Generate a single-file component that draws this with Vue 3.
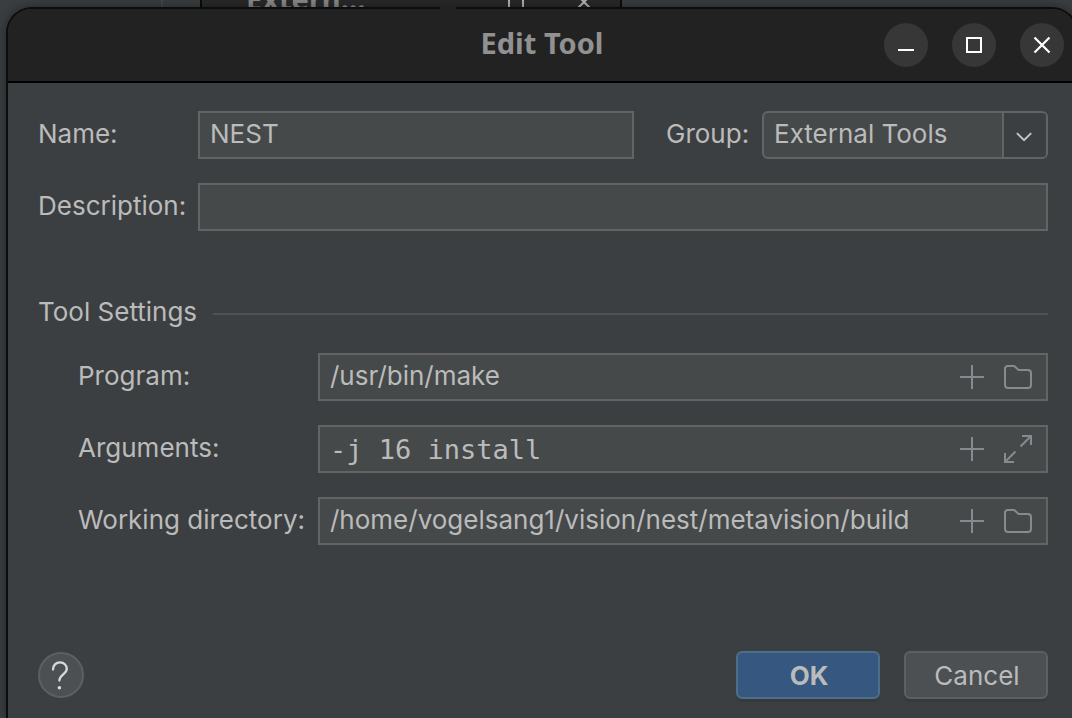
<script setup>
import { ref } from 'vue'

const name = ref('NEST')
const group = ref('External Tools')
const description = ref('')
const settings = ref([
  { id: 'program', label: 'Program:', value: '/usr/bin/make', action: 'browse', mono: false },
  { id: 'arguments', label: 'Arguments:', value: '-j 16 install', action: 'expand', mono: true },
  { id: 'directory', label: 'Working directory:', value: '/home/vogelsang1/vision/nest/metavision/build', action: 'browse', mono: false },
])
</script>

<template>
  <div class="desktop">
    <div class="pane-edge"></div>
    <div class="back-window">
      <span class="back-title">Extern…</span>
      <svg class="back-controls" width="84" height="12" viewBox="0 0 84 12" fill="none" stroke="#b4b4b4" stroke-width="2">
        <path d="M1 -6H15V8H1Z M70 -4L82 8M82 -4L70 8" />
      </svg>
    </div>

    <main class="dialog">
      <header class="titlebar">
        <h1>Edit Tool</h1>
        <div class="controls">
          <button type="button" aria-label="Minimize">
            <svg width="44" height="44" viewBox="0 0 44 44"><path d="M14 26H30V28H14Z" fill="#fff" /></svg>
          </button>
          <button type="button" aria-label="Maximize">
            <svg width="44" height="44" viewBox="0 0 44 44"><path d="M15 15H29V29H15Z" fill="none" stroke="#fff" stroke-width="2" /></svg>
          </button>
          <button type="button" aria-label="Close">
            <svg width="44" height="44" viewBox="0 0 44 44"><path d="M14.5 14.5L29.5 29.5M29.5 14.5L14.5 29.5" fill="none" stroke="#fff" stroke-width="2.2" /></svg>
          </button>
        </div>
      </header>

      <form class="content" @submit.prevent>
        <div class="row">
          <label class="main-label" for="name">Name:</label>
          <div class="field"><input id="name" v-model="name" type="text" /></div>
          <label class="group-label" for="group">Group:</label>
          <div class="combo">
            <select id="group" v-model="group">
              <option>External Tools</option>
            </select>
            <svg class="chevron" width="44" height="44" viewBox="0 0 44 44">
              <path d="M13.5 20L21 27.5L28.5 20" fill="none" stroke="#c3c5c7" stroke-width="2" />
            </svg>
          </div>
        </div>
        <div class="row">
          <label class="main-label" for="description">Description:</label>
          <div class="field"><input id="description" v-model="description" type="text" /></div>
        </div>

        <fieldset>
          <legend>Tool Settings</legend>
          <div v-for="item in settings" :key="item.id" class="row">
            <label class="setting-label" :for="item.id">{{ item.label }}</label>
            <div class="field">
              <input :id="item.id" v-model="item.value" :class="{ mono: item.mono }" type="text" />
              <button class="tool" type="button" aria-label="Insert macro">
                <svg width="32" height="32" viewBox="0 0 32 32"><path d="M16 4V28M4 16H28" /></svg>
              </button>
              <button class="tool" type="button" :aria-label="item.action === 'browse' ? 'Browse' : 'Expand'">
                <svg width="32" height="32" viewBox="0 0 32 32">
                  <path v-if="item.action === 'browse'" d="M6 5H12.2L16.6 9H26Q29 9 29 12V24Q29 27 26 27H6Q3 27 3 24V8Q3 5 6 5Z" />
                  <path v-else d="M20 3H29V12M29 3L18.5 13.5M3 20V29H12M3 29L13.5 18.5" />
                </svg>
              </button>
            </div>
          </div>
        </fieldset>

        <footer>
          <button class="help" type="button" aria-label="Help">
            <svg width="42" height="42" viewBox="0 0 42 42">
              <path d="M13 15.5C13 11.4 16 8.3 20 8.3C24 8.3 26.8 11.2 26.8 14.8C26.8 20.3 19.4 20.4 19.4 26.5" fill="none" stroke="#d7dadc" stroke-width="2.3" stroke-linecap="round" />
              <circle cx="19.4" cy="33.8" r="1.8" fill="#d7dadc" />
            </svg>
          </button>
          <button class="action primary" type="submit">OK</button>
          <button class="action" type="button">Cancel</button>
        </footer>
      </form>
    </main>
  </div>
</template>

<style>
body {
  margin: 0;
  background: #3c3f41;
}
</style>

<style scoped>
* {
  box-sizing: border-box;
}
.desktop {
  position: relative;
  display: flex;
  min-height: 100vh;
  padding: 7px 0 0 6px;
  overflow: hidden;
  background: #3a3e40;
  color: #bbbbbb;
  font: 26px/32px Inter, "Liberation Sans", sans-serif;
}
button, input, select {
  margin: 0;
  padding: 0;
  border: 0;
  color: inherit;
  font: inherit;
  outline: 0;
}
svg {
  display: block;
}
.pane-edge {
  position: absolute;
  top: 0;
  left: 161px;
  width: 2px;
  height: 10px;
  background: #46484a;
}
.back-window {
  position: absolute;
  top: 0;
  left: 200px;
  width: 422px;
  height: 24px;
  border: solid #0b0b0b;
  border-width: 0 2px;
  background: #292929;
}
.back-title {
  position: absolute;
  bottom: 7px;
  left: 44px;
  color: #8a8a8a;
  font: bold 29px/36px "Noto Sans", sans-serif;
}
.back-controls {
  position: absolute;
  top: 0;
  left: 306px;
}
.dialog {
  position: relative;
  display: flex;
  flex: 1;
  flex-direction: column;
  margin-right: -6px;
  border: 2px solid #0b0c0c;
  border-bottom: 0;
  border-radius: 26px 26px 0 0;
  background: #3c3f41;
  box-shadow: 0 0 12px #0006;
}
.dialog::before {
  position: absolute;
  top: -2px;
  left: 432px;
  width: 16px;
  height: 2px;
  background: #222222;
  content: "";
}
.titlebar {
  display: grid;
  grid-template-columns: 1fr auto 1fr;
  align-items: center;
  height: 74px;
  padding: 0 12px 0;
  border-bottom: 2px solid #000;
  border-radius: 24px 24px 0 0;
  background: #222222;
}
h1 {
  grid-column: 2;
  margin: 0;
  padding-bottom: 4px;
  color: #919191;
  font: bold 29px/36px "Noto Sans", sans-serif;
}
.controls {
  display: flex;
  justify-content: flex-end;
  gap: 24px;
}
.controls button {
  width: 44px;
  height: 44px;
  border-radius: 50%;
  background: #373737;
}
.content {
  display: flex;
  flex: 1;
  flex-direction: column;
  gap: 24px;
  padding: 28px 28px 19px 30px;
}
.row {
  display: flex;
}
label {
  padding: 7px 0 9px;
  white-space: nowrap;
}
.main-label {
  width: 160px;
}
.group-label {
  width: 128px;
  padding-left: 32px;
}
.setting-label {
  width: 280px;
  padding-left: 40px;
}
.field {
  display: flex;
  flex: 1;
  align-items: center;
  gap: 14px;
  min-width: 0;
  height: 48px;
  padding: 0 12px 0 10px;
  border: 2px solid #646464;
  background: #45494a;
}
.field input {
  flex: 1;
  min-width: 0;
  height: 44px;
  padding-bottom: 4px;
  background: none;
}
.field .mono {
  padding-bottom: 0;
  font-family: "DejaVu Sans Mono", monospace;
  font-size: 27px;
}
.tool {
  width: 32px;
  height: 32px;
  background: none;
}
.tool path {
  fill: none;
  stroke: #878a90;
  stroke-width: 2;
}
.combo {
  position: relative;
  width: 286px;
  height: 48px;
  border: 2px solid #646464;
  border-radius: 6px;
  background: #45494a;
}
.combo select {
  width: 100%;
  height: 44px;
  padding: 0 46px 2px 10px;
  background: none;
  appearance: none;
}
.chevron {
  position: absolute;
  top: 0;
  right: 0;
  border-left: 2px solid #646464;
  border-radius: 0 4px 4px 0;
  background: #3c3f41;
  pointer-events: none;
}
fieldset {
  display: flex;
  flex-direction: column;
  gap: 24px;
  min-width: 0;
  margin: 41px 0 0;
  padding: 0;
  border: 0;
}
legend {
  display: flex;
  align-items: center;
  gap: 16px;
  width: 100%;
  margin-bottom: 25px;
  padding: 0;
}
legend::after {
  flex: 1;
  height: 2px;
  margin-top: 4px;
  background: #515151;
  content: "";
}
footer {
  display: flex;
  align-items: center;
  gap: 24px;
  margin-top: auto;
}
.help {
  width: 46px;
  height: 46px;
  margin-right: auto;
  border: 2px solid #5e6060;
  border-radius: 50%;
  background: #4c5052;
}
.action {
  width: 144px;
  height: 48px;
  padding-top: 2px;
  padding-left: 2px;
  border: 2px solid #5e6060;
  border-radius: 6px;
  background: #4c5052;
  box-shadow: 0 3px 0 #37393a;
}
.primary {
  border-color: #4c708c;
  background: #365880;
  font-weight: 700;
}
</style>
